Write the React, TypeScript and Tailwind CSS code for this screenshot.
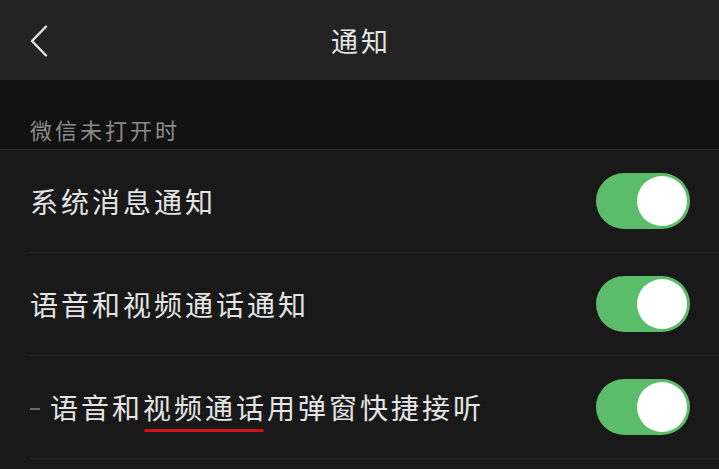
import React from 'react';

function Toggle() {
  return (
    <div className="w-[94px] h-[56px] rounded-full bg-[#5bbd69] flex items-center justify-end p-[3px] shrink-0">
      <div className="w-[50px] h-[50px] rounded-full bg-white" />
    </div>
  );
}

function Row({ children }: { children: React.ReactNode }) {
  return (
    <div className="pl-[30px]">
      <div className="h-[103px] flex items-center justify-between pr-[29px] border-b border-[#2b2b2b]">
        {children}
        <Toggle />
      </div>
    </div>
  );
}

export default function App() {
  return (
    <div
      className="w-[719px] h-[469px] overflow-hidden bg-[#191919] text-[#e4e4e4]"
      style={{ fontFamily: '"Noto Sans CJK SC", "Noto Sans", sans-serif' }}
    >
      <header className="h-[80px] bg-[#232323] flex items-center relative">
        <button className="absolute left-[28px] top-[24px] w-[22px] h-[33px] flex items-center justify-center">
          <svg width="20" height="32" viewBox="0 0 20 32" fill="none">
            <polyline points="17,1.5 3,16 17,30.5" stroke="#e6e6e6" strokeWidth="2.4" strokeLinecap="round" strokeLinejoin="round" />
          </svg>
        </button>
        <h1 className="flex-1 text-center text-[27px] tracking-[3px] font-normal leading-none pl-[3px]">通知</h1>
      </header>

      <div className="h-[70px] bg-[#121212] flex items-end pl-[30px] pb-[9px] border-b border-[#2b2b2b]">
        <span className="text-[22px] tracking-[3px] text-[#8b8b8b] leading-none">微信未打开时</span>
      </div>

      <Row>
        <span className="text-[28px] tracking-[3px] leading-none">系统消息通知</span>
      </Row>
      <Row>
        <span className="text-[28px] tracking-[3px] leading-none">语音和视频通话通知</span>
      </Row>
      <Row>
        <span className="text-[28px] tracking-[3px] leading-none flex items-center">
          <span className="w-[10px] h-[2px] bg-[#6a6a6a] mr-[10px] mt-[4px]" />
          语音和
          <span className="relative">
            视频通话
            <span className="absolute left-[1px] right-[3px] -bottom-[11px] h-[3px] rounded-full bg-[#d4121a]" />
          </span>
          用弹窗快捷接听
        </span>
      </Row>
    </div>
  );
}
